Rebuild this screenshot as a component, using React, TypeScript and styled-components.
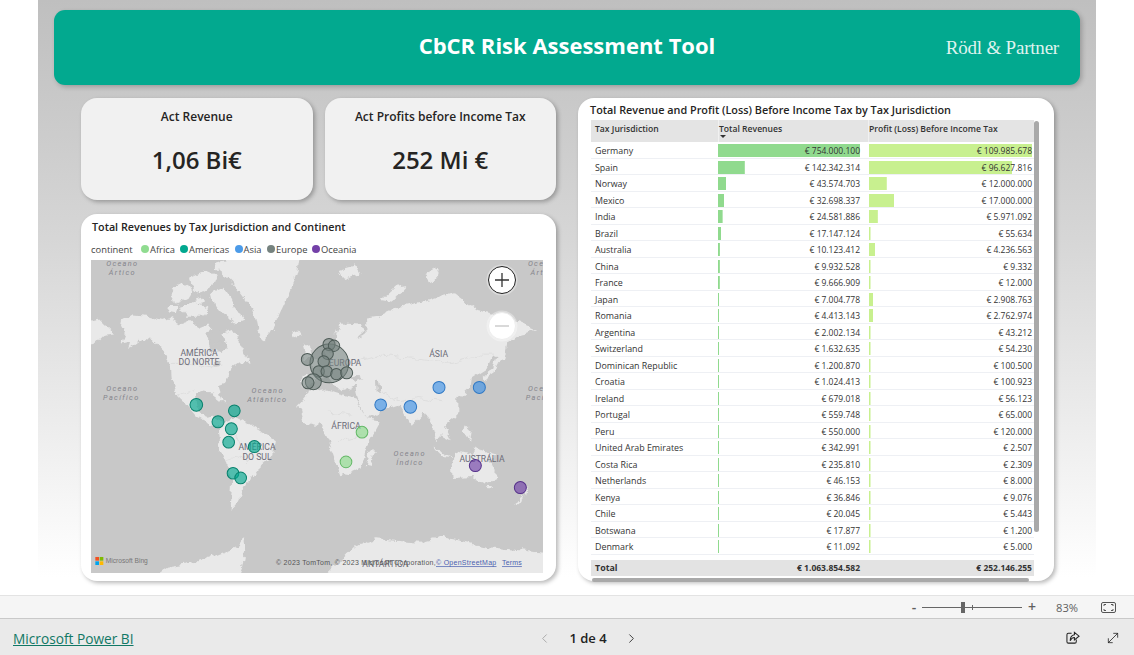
import React from "react";
import styled, { createGlobalStyle } from "styled-components";
import { ChevronLeft, ChevronRight, MoveDiagonal } from "lucide-react";

const Global = createGlobalStyle`
  html, body { margin: 0; padding: 0; background: #fff; overflow: hidden; }
  body { font-family: "Open Sans", "Noto Sans", sans-serif; }
  * { box-sizing: border-box; }
`;

const Page = styled.div`
  width: 1134px;
  height: 655px;
  display: flex;
  flex-direction: column;
  background: #fff;
`;
const Report = styled.main`
  width: 1058px;
  height: 595px;
  margin-left: 38px;
  padding: 10px 16px 0;
  background: linear-gradient(180deg, #bfbfbf 0%, #d6d6d6 40%, #ffffff 97%);
`;
const Banner = styled.header`
  height: 75px;
  display: grid;
  grid-template-columns: 1fr auto 1fr;
  align-items: center;
  background: #02a98f;
  border-radius: 11px;
  box-shadow: 2px 2px 5px rgba(0, 0, 0, 0.22);
  color: #fff;
`;
const Title = styled.h1`
  grid-column: 2;
  margin: 0 0 5px;
  font-size: 22px;
  font-weight: 700;
`;
const Logo = styled.div`
  grid-column: 3;
  justify-self: end;
  padding: 1px 21px 0 0;
  font-family: "Liberation Serif", serif;
  font-size: 19px;
  letter-spacing: -0.2px;
  color: #dff3ee;
`;
const Body = styled.div`
  display: flex;
  gap: 22px;
  margin-top: 13px;
  padding-left: 27px;
`;
const LeftColumn = styled.div`
  width: 475px;
  display: flex;
  flex-direction: column;
  gap: 14px;
`;
const KpiRow = styled.div`
  display: flex;
  gap: 12px;
`;
const KpiCard = styled.section`
  flex: 1;
  height: 102px;
  padding-top: 10px;
  text-align: center;
  background: #f1f1f1;
  border-radius: 16px;
  box-shadow: 2px 2px 4px rgba(0, 0, 0, 0.28);
  color: #252423;
`;
const KpiLabel = styled.div`
  font-size: 12px;
  line-height: 18px;
  font-weight: 600;
`;
const KpiValue = styled.div`
  margin-top: 17px;
  font-size: 24px;
  line-height: 34px;
  font-weight: 600;
`;
const MapCard = styled.section`
  height: 367px;
  padding: 6px 13px 0 10px;
  background: #fff;
  border-radius: 16px;
  box-shadow: 2px 2px 4px rgba(0, 0, 0, 0.28);
`;
const VisualTitle = styled.div`
  padding-left: 1px;
  font-size: 10.75px;
  line-height: 14px;
  font-weight: 600;
  color: #252423;
`;
const Legend = styled.div`
  display: flex;
  align-items: center;
  height: 14px;
  margin-top: 8px;
  font-size: 9.4px;
  color: #444;
`;
const LegendName = styled.span`
  width: 50px;
`;
const LegendItem = styled.span<{ $w: number }>`
  width: ${(p) => p.$w}px;
  display: flex;
  align-items: center;
  gap: 1px;
`;
const Dot = styled.i<{ $c: string }>`
  width: 8px;
  height: 8px;
  border-radius: 50%;
  background: ${(p) => p.$c};
`;
const MapFrame = styled.div`
  position: relative;
  width: 452px;
  height: 313px;
  margin-top: 4px;
  overflow: hidden;
  background: #c8c8c8;
`;
const MapSvg = styled.svg`
  display: block;
  width: 452px;
  height: 313px;
`;
const ZoomCircle = styled.button<{ $top: number; $active?: boolean }>`
  position: absolute;
  top: ${(p) => p.$top}px;
  left: 397px;
  width: 28px;
  height: 28px;
  padding: 0;
  display: flex;
  align-items: center;
  justify-content: center;
  border-radius: 50%;
  background: #fff;
  border: ${(p) => (p.$active ? "1.5px solid #222" : "1px solid #eee")};
  box-shadow: 0 0 0 1.5px rgba(255, 255, 255, 0.35);
`;
const TablePanel = styled.section`
  width: 476px;
  height: 483px;
  padding: 5px 14px 0 13px;
  background: #fff;
  border-radius: 16px;
  box-shadow: 2px 2px 4px rgba(0, 0, 0, 0.28);
`;
const PanelTitle = styled(VisualTitle)`
  margin-left: -1px;
  padding-left: 0;
  font-size: 10.85px;
`;
const TableScroller = styled.div`
  position: relative;
  margin-top: 3px;
  width: 448px;
`;
const VScroll = styled.div`
  position: absolute;
  top: 1px;
  right: 0;
  width: 5px;
  height: 411px;
  border-radius: 3px;
  background: #a9a9a9;
`;
const HScroll = styled.div`
  width: 437px;
  height: 4px;
  margin: 2px 0 0 1px;
  border-radius: 2px;
  background: #a9a9a9;
`;
const grid = `
  display: grid;
  grid-template-columns: 127px 150px 166px;
  width: 443px;
  font-size: 8.5px;
`;
const HeadRow = styled.div`
  ${grid}
  height: 22px;
  background: #e4e4e4;
  font-size: 8.6px;
  font-weight: 600;
  color: #333;
`;
const HeadCell = styled.div`
  position: relative;
  padding: 3px 0 0 4px;
  line-height: 12px;
  white-space: nowrap;
  & + & { padding-left: 0; border-left: 1px solid #f1f1f1; }
`;
const SortCaret = styled.i`
  position: absolute;
  left: 1px;
  top: 15px;
  border-left: 3px solid transparent;
  border-right: 3px solid transparent;
  border-top: 3px solid #333;
`;
const Row = styled.div`
  ${grid}
  height: 16.5px;
  line-height: 18px;
  color: #333;
  border-bottom: 1px solid #eef0f4;
`;
const NameCell = styled.div`
  padding-left: 4px;
  font-size: 8.9px;
  white-space: nowrap;
`;
const BarCell = styled.div<{ $c: string; $r: number; $x: number }>`
  padding-right: ${(p) => p.$r}px;
  text-align: right;
  white-space: nowrap;
  background-image: linear-gradient(${(p) => p.$c}, ${(p) => p.$c});
  background-repeat: no-repeat;
  background-position: ${(p) => p.$x}px 2px;
`;
const TotalRow = styled.div`
  ${grid}
  height: 16px;
  margin-top: 5.5px;
  line-height: 16px;
  background: #e3e3e3;
  font-weight: 700;
  color: #333;
`;
const NumCell = styled.div<{ $r: number }>`
  padding-right: ${(p) => p.$r}px;
  text-align: right;
`;
const ZoomBar = styled.div`
  height: 24px;
  display: flex;
  align-items: center;
  justify-content: flex-end;
  padding-right: 18px;
  background: #f5f5f5;
  border-top: 1px solid #e3e3e3;
  border-bottom: 1px solid #c9c9c9;
  color: #5f5f5f;
`;
const ZoomSign = styled.span<{ $w: number }>`
  width: ${(p) => p.$w}px;
  font-size: 14px;
  line-height: 14px;
  font-weight: 600;
  text-align: center;
`;
const Slider = styled.div`
  position: relative;
  width: 100px;
  height: 1px;
  margin: 0 4px;
  background: #666;
`;
const Thumb = styled.i`
  position: absolute;
  left: 39px;
  top: -5px;
  width: 4px;
  height: 11px;
  background: #666;
`;
const Tick = styled.i`
  position: absolute;
  left: 50px;
  top: -2px;
  width: 1px;
  height: 5px;
  background: #666;
`;
const Percent = styled.span`
  width: 22px;
  margin: 0 23px 0 18px;
  font-size: 11.2px;
`;
const BottomBar = styled.footer`
  flex: 1;
  display: grid;
  grid-template-columns: 1fr auto 1fr;
  align-items: center;
  padding: 2px 13px 0 13px;
  background: #eaeaea;
`;
const BrandLink = styled.a`
  font-size: 13.7px;
  color: #117865;
  text-decoration: underline;
`;
const Pager = styled.nav`
  display: flex;
  align-items: center;
  gap: 17px;
  margin-left: 42px;
  font-size: 13px;
  font-weight: 600;
  color: #222;
`;
const Actions = styled.div`
  justify-self: end;
  display: flex;
  align-items: center;
  gap: 25px;
`;

const rows: [string, number, number][] = [
  ["Germany", 754000100, 109985678],
  ["Spain", 142342314, 96627816],
  ["Norway", 43574703, 12000000],
  ["Mexico", 32698337, 17000000],
  ["India", 24581886, 5971092],
  ["Brazil", 17147124, 55634],
  ["Australia", 10123412, 4236563],
  ["China", 9932528, 9332],
  ["France", 9666909, 12000],
  ["Japan", 7004778, 2908763],
  ["Romania", 4413143, 2762974],
  ["Argentina", 2002134, 43212],
  ["Switzerland", 1632635, 54230],
  ["Dominican Republic", 1200870, 100500],
  ["Croatia", 1024413, 100923],
  ["Ireland", 679018, 56123],
  ["Portugal", 559748, 65000],
  ["Peru", 550000, 120000],
  ["United Arab Emirates", 342991, 2507],
  ["Costa Rica", 235810, 2309],
  ["Netherlands", 46153, 8000],
  ["Kenya", 36846, 9076],
  ["Chile", 20045, 5443],
  ["Botswana", 17877, 1200],
  ["Denmark", 11092, 5000],
];
const fmt = (n: number) => "€ " + n.toString().replace(/\B(?=(\d{3})+(?!\d))/g, ".");

const land = [
  // North America
  "M125 190L160 178L200 182L245 195L270 190L300 207L330 198L360 215L385 205L397 225L378 250L395 285L425 300L442 270L430 235L455 225L482 270L512 322L475 325L447 345L432 375L417 400L430 442L415 430L395 415L365 412L345 420L350 455L375 482L397 478L407 497L432 507L415 516L385 500L350 482L315 440L295 420L275 375L272 325L250 290L215 255L185 250L145 280L150 260L125 265L135 240L120 215Z",
  // Arctic islands
  "M270 100L300 85L335 105L320 130L285 145Z",
  "M330 65L375 45L410 60L395 95L355 120L335 100Z",
  "M395 110L430 95L455 130L470 165L490 195L465 205L430 180L405 150Z",
  "M300 155L345 140L385 160L370 185L325 185Z",
  "M270 150L295 150L290 175L265 170Z",
  "M345 130L365 125L375 140L350 145Z",
  "M405 30L450 18L470 45L435 65Z",
  // Greenland
  "M405 40L470 0L540 0L660 0L650 60L625 120L592 190L552 262L532 222L520 165L475 105L440 65Z",
  "M636 232L655 226L662 238L645 244Z",
  // South America
  "M420 512L470 488L512 510L585 555L577 600L532 640L502 682L472 742L452 765L456 682L440 622L418 572L414 532Z",
  // Africa
  "M655 450L690 410L735 402L765 412L830 430L862 492L902 498L862 572L842 640L782 666L745 562L722 512L670 500Z",
  "M865 592L882 585L872 635L858 632Z",
  // Eurasia
  "M665 392L668 368L695 352L700 322L728 302L732 285L752 292L748 262L785 205L842 208L852 232L830 250L860 240L858 190L895 185L960 155L1050 135L1122 115L1190 165L1280 185L1372 225L1322 235L1282 265L1272 312L1240 300L1222 340L1172 372L1168 400L1132 432L1132 482L1092 512L1112 555L1082 540L1072 565L1052 500L1032 472L992 512L958 450L905 468L862 492L832 422L826 392L782 405L770 395L738 372L705 372L688 395Z",
  // Arctic Russia islands
  "M905 135L950 95L985 90L935 140Z",
  "M1040 65L1065 30L1075 60L1055 85Z",
  "M775 45L830 30L845 55L790 75Z",
  // UK
  "M672 262L690 275L695 305L668 312L680 288Z",
  // Japan
  "M1255 280L1270 300L1245 350L1212 372L1208 362L1240 338Z",
  // Indonesia, Philippines
  "M1060 575L1100 600L1120 608L1085 605Z",
  "M1125 590L1165 600L1145 630L1120 620Z",
  "M1130 612L1205 622L1200 628L1130 622Z",
  "M1180 580L1250 600L1235 610L1195 600Z",
  "M1160 510L1175 525L1170 560L1155 535Z",
  // Australia
  "M1115 625L1150 605L1185 590L1222 600L1247 650L1245 672L1215 685L1180 665L1118 668Z",
  "M1222 695L1234 695L1230 705L1222 704Z",
  // New Zealand
  "M1328 708L1345 692L1338 722Z",
  "M1322 730L1332 722L1318 745L1302 755Z",
  // Chukotka tail
  "M0 200L55 188L105 235L70 240L40 270L0 275Z",
  // Antarctica
  "M205 975L260 935L342 920L402 900L472 872L492 842L497 880L478 975Z",
  "M720 975L830 870L890 852L1020 862L1090 845L1220 875L1420 895L1420 975Z",
];

const seas = [
  "M805 365L835 360L850 372L820 380Z",
  "M888 370L898 372L902 410L890 410Z",
  "M745 255L770 235L765 275L752 290L742 275Z",
  "M715 342L738 352L760 385L735 372Z",
  "M395 325L420 318L422 332L400 335Z",
  "M375 235L420 228L425 262L395 270Z",
];

const borders = [
  "M272 325L330 325L395 335L430 330",
  "M295 420L345 405",
  "M830 320L900 300L1000 310L1100 325L1190 300L1240 300",
  "M905 410L960 440L1010 430L1090 440",
  "M740 470L820 480M770 560L850 540",
  "M470 540L500 620M440 620L500 600",
];

const bubbles: { c: string; s: string; o: number; pts: [number, number, number][] }[] = [
  {
    c: "#76837f",
    s: "#4d5a56",
    o: 0.58,
    pts: [
      [748, 325, 58], [682, 313, 18], [747, 268, 18], [762, 272, 17], [743, 296, 17], [731, 319, 17],
      [716, 349, 17], [740, 349, 17], [769, 357, 17], [800, 353, 18], [700, 380, 24], [684, 383, 18],
    ],
  },
  {
    c: "#01a88f",
    s: "#07806c",
    o: 0.65,
    pts: [[349, 449, 19], [463, 467, 17.5], [414, 500, 18], [454, 521, 18], [446, 561, 17.5], [523, 574, 18], [459, 654, 17.5], [482, 668, 17.5]],
  },
  { c: "#3f92e6", s: "#2f78c4", o: 0.65, pts: [[1077, 397, 18], [1198, 397, 18], [902, 449, 17.5], [991, 455, 19]] },
  { c: "#8ddc8c", s: "#63b866", o: 0.65, pts: [[846, 531, 17.5], [798, 620, 17.5]] },
  { c: "#7040a8", s: "#55308a", o: 0.65, pts: [[1186, 631, 18], [1321, 697, 18]] },
];

const regionLabels: [string, number, number][] = [
  ["AMÉRICA", 357, 302], ["DO NORTE", 357, 330], ["EUROPA", 795, 332], ["ÁSIA", 1076, 307],
  ["ÁFRICA", 798, 520], ["AMÉRICA", 531, 585], ["DO SUL", 531, 613], ["AUSTRÁLIA", 1206, 619], ["ANTÁRTICA", 916, 936],
];
const oceanLabels: [string, number, number][] = [
  ["Oceano", 127, 32], ["Ártico", 127, 59], ["Oceano", 1392, 32], ["Ártico", 1392, 59],
  ["Oceano", 127, 409], ["Pacífico", 124, 436], ["Oceano", 563, 413], ["Atlântico", 562, 441],
  ["Oceano", 989, 602], ["Índico", 990, 629], ["Oceano", 1392, 409], ["Pacífico", 1392, 436],
];

function WorldMap() {
  return (
    <MapSvg viewBox="33 15 1356 938" preserveAspectRatio="none">
      <defs>
        <filter id="coast" filterUnits="userSpaceOnUse" x="0" y="0" width="1440" height="990">
          <feTurbulence type="fractalNoise" baseFrequency="0.035" numOctaves="4" seed="7" result="n" />
          <feDisplacementMap in="SourceGraphic" in2="n" scale="26" xChannelSelector="R" yChannelSelector="G" />
          <feGaussianBlur stdDeviation="1.3" />
        </filter>
      </defs>
      <g filter="url(#coast)">
        {land.map((d) => (
          <path key={d} d={d} fill="#e9e9e9" />
        ))}
        {seas.map((d) => (
          <path key={d} d={d} fill="#c8c8c8" />
        ))}
        {borders.map((d) => (
          <path key={d} d={d} fill="none" stroke="#d8d8d8" strokeWidth="2" />
        ))}
      </g>
      <g fontFamily="Roboto, sans-serif">
        {regionLabels.map(([t, x, y]) => (
          <text key={t + x} x={x} y={y} fontSize="26" textAnchor="middle" fill="#6c6c78">
            {t}
          </text>
        ))}
        {oceanLabels.map(([t, x, y]) => (
          <text key={t + x + y} x={x} y={y} fontSize="22" fontStyle="italic" letterSpacing="4" textAnchor="middle" fill="#85858c">
            {t}
          </text>
        ))}
      </g>
      {bubbles.map((b) =>
        b.pts.map(([x, y, r]) => (
          <circle key={`${x}-${y}`} cx={x} cy={y} r={r} fill={b.c} fillOpacity={b.o} stroke={b.s} strokeWidth="3" />
        ))
      )}
      <rect x="46" y="905" width="11" height="11" fill="#f25022" />
      <rect x="59" y="905" width="11" height="11" fill="#7fba00" />
      <rect x="46" y="918" width="11" height="11" fill="#00a4ef" />
      <rect x="59" y="918" width="11" height="11" fill="#ffb900" />
      <text x="77" y="924" fontFamily="Liberation Sans, sans-serif" fontSize="20" fill="#777">
        Microsoft Bing
      </text>
      <text x="588" y="930" fontFamily="Liberation Sans, sans-serif" fontSize="21" letterSpacing="0.8" fill="#555">
        © 2023 TomTom, © 2023 Microsoft Corporation,
      </text>
      <text x="1068" y="930" fontFamily="Liberation Sans, sans-serif" fontSize="21" letterSpacing="0.8" fill="#4a5fb0" textDecoration="underline">
        © OpenStreetMap
      </text>
      <text x="1266" y="930" fontFamily="Liberation Sans, sans-serif" fontSize="21" letterSpacing="0.5" fill="#4a5fb0" textDecoration="underline">
        Terms
      </text>
    </MapSvg>
  );
}

const legend: [string, string, number][] = [
  ["Africa", "#90dc90", 39],
  ["Americas", "#01a88f", 54.5],
  ["Asia", "#4c9be8", 32.5],
  ["Europe", "#76837f", 45],
  ["Oceania", "#7440a8", 60],
];

export default function App() {
  const max1 = rows[0][1];
  const max2 = rows[0][2];
  return (
    <Page>
      <Global />
      <Report>
        <Banner>
          <Title>CbCR Risk Assessment Tool</Title>
          <Logo>Rödl &amp; Partner</Logo>
        </Banner>
        <Body>
          <LeftColumn>
            <KpiRow>
              <KpiCard>
                <KpiLabel>Act Revenue</KpiLabel>
                <KpiValue>1,06 Bi€</KpiValue>
              </KpiCard>
              <KpiCard>
                <KpiLabel>Act Profits before Income Tax</KpiLabel>
                <KpiValue>252 Mi €</KpiValue>
              </KpiCard>
            </KpiRow>
            <MapCard>
              <VisualTitle>Total Revenues by Tax Jurisdiction and Continent</VisualTitle>
              <Legend>
                <LegendName>continent</LegendName>
                {legend.map(([n, c, w]) => (
                  <LegendItem key={n} $w={w}>
                    <Dot $c={c} />
                    {n}
                  </LegendItem>
                ))}
              </Legend>
              <MapFrame>
                <WorldMap />
                <ZoomCircle $top={6} $active aria-label="Zoom in">
                  <svg width="16" height="16" viewBox="0 0 16 16">
                    <path d="M8 1v14M1 8h14" stroke="#333" strokeWidth="1.3" />
                  </svg>
                </ZoomCircle>
                <ZoomCircle $top={52} aria-label="Zoom out">
                  <svg width="16" height="16" viewBox="0 0 16 16">
                    <path d="M1 8h14" stroke="#c4c4c4" strokeWidth="1.3" />
                  </svg>
                </ZoomCircle>
              </MapFrame>
            </MapCard>
          </LeftColumn>
          <TablePanel>
            <PanelTitle>Total Revenue and Profit (Loss) Before Income Tax by Tax Jurisdiction</PanelTitle>
            <TableScroller>
              <HeadRow>
                <HeadCell>Tax Jurisdiction</HeadCell>
                <HeadCell>
                  Total Revenues
                  <SortCaret />
                </HeadCell>
                <HeadCell>Profit (Loss) Before Income Tax</HeadCell>
              </HeadRow>
              {rows.map(([name, a, b]) => (
                <Row key={name}>
                  <NameCell>{name}</NameCell>
                  <BarCell $c="#90da8e" $r={8} $x={0} style={{ backgroundSize: `${Math.max(1, (a / max1) * 142)}px 13px` }}>
                    {fmt(a)}
                  </BarCell>
                  <BarCell $c="#c8f08f" $r={2} $x={1} style={{ backgroundSize: `${Math.max(1.5, (b / max2) * 163)}px 13px` }}>
                    {fmt(b)}
                  </BarCell>
                </Row>
              ))}
              <TotalRow>
                <NameCell>Total</NameCell>
                <NumCell $r={8}>€ 1.063.854.582</NumCell>
                <NumCell $r={2}>€ 252.146.255</NumCell>
              </TotalRow>
              <HScroll />
              <VScroll />
            </TableScroller>
          </TablePanel>
        </Body>
      </Report>
      <ZoomBar>
        <ZoomSign $w={8}>-</ZoomSign>
        <Slider>
          <Thumb />
          <Tick />
        </Slider>
        <ZoomSign $w={12}>+</ZoomSign>
        <Percent>83%</Percent>
        <svg width="15" height="11" viewBox="0 0 15 11" fill="none" stroke="#555">
          <rect x="0.5" y="0.5" width="14" height="10" rx="1.5" />
          <path d="M3 4V2.5h2M12 4V2.5h-2M3 7v1.5h2M12 7v1.5h-2" />
        </svg>
      </ZoomBar>
      <BottomBar>
        <BrandLink>Microsoft Power BI</BrandLink>
        <Pager>
          <ChevronLeft size={15} color="#a8a8a8" strokeWidth={1.5} />
          <span>1 de 4</span>
          <ChevronRight size={15} color="#333" strokeWidth={1.5} />
        </Pager>
        <Actions>
          <svg width="14" height="14" viewBox="0 0 15 15" fill="none" stroke="#222" strokeWidth="1.1">
            <path d="M6 2.5H2.5a1.5 1.5 0 0 0-1.5 1.5v7.5A1.5 1.5 0 0 0 2.5 13h7a1.5 1.5 0 0 0 1.5-1.5V9" />
            <path d="M9 1.5l5 4-5 4V7C7 7 5.5 8 4.5 10.5 4.5 7 6 4.5 9 4Z" />
          </svg>
          <MoveDiagonal size={16} color="#222" strokeWidth={1.2} />
        </Actions>
      </BottomBar>
    </Page>
  );
}
